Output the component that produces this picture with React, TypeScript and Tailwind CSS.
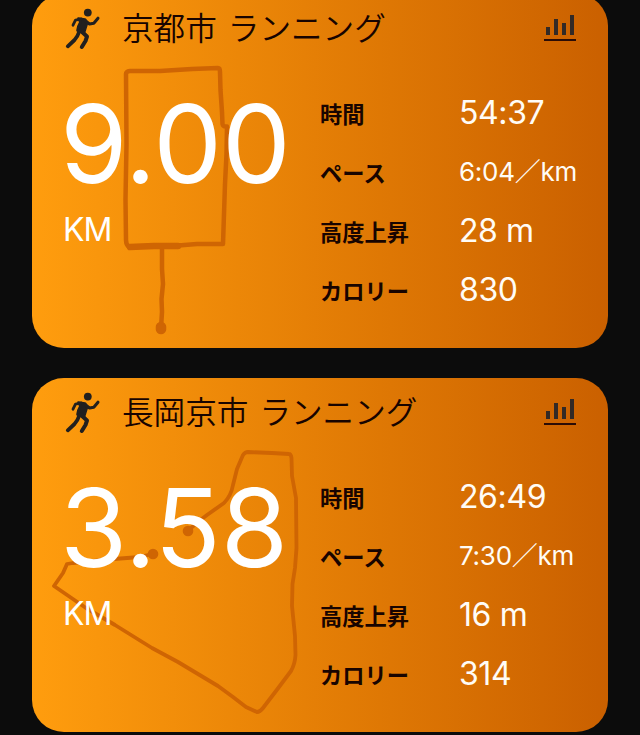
import React from 'react';

interface Run {
  id: number;
  title: string;
  distance: string;
  stats: { label: string; value: string; small?: boolean }[];
  route: string[];
  trail?: string;
  dots: [number, number][];
  lineWidth: number;
}

// Route coordinates are in card space (576 x 354)
const runs: Run[] = [
  {
    id: 1,
    title: '京都市 ランニング',
    distance: '9.00',
    stats: [
      { label: '時間', value: '54:37' },
      { label: 'ペース', value: '6:04／km', small: true },
      { label: '高度上昇', value: '28 m' },
      { label: 'カロリー', value: '830' }
    ],
    route: [
      'M97 253 Q94 251 94 246 L93.500 205 L94.500 150 L94 80 Q94 77.500 98 77 L128 77 L160 75 L186 74 Q188 74 188 78 L188.500 96 L190 118 L190.500 130 Q191 133 195 132.500 L194.500 160 L193 190 L192 220 L191 250 L165 250 L140 252 L97 253',
      'M130 254 L130 275 L131 290 L129.500 305 L130 318 L129 334'
    ],
    trail: 'M98 253 L122 252 L146 252',
    dots: [[129, 333], [129, 335]],
    lineWidth: 4.5
  },
  {
    id: 2,
    title: '長岡京市 ランニング',
    distance: '3.58',
    stats: [
      { label: '時間', value: '26:49' },
      { label: 'ペース', value: '7:30／km', small: true },
      { label: '高度上昇', value: '16 m' },
      { label: 'カロリー', value: '314' }
    ],
    route: [
      'M156 153 Q163 146 175 137 L192 125 Q199 118 201 107 L205 91 L211 77 Q213 74 216 74 L240 75 L257 76 Q259 76 259.500 80 L260 98 L264 120 L264.500 170 L263 190 L260.500 206 L260 228 L263 258 L263.500 277 Q263 286 259 293 L244 313 L231 330 Q228 334 225 334 L214 329 L201 319 L186 308 L146 284 L120 270 L83 247 L54 230 L22 208 L31 195 L35 186 L41 185 L82 181 L108 179 L120 176'
    ],
    dots: [[156, 153], [121, 176]],
    lineWidth: 3.8
  }
];

function RunnerIcon() {
  return (
    <svg className="relative top-px" width="36" height="42" viewBox="0 0 36 42" fill="none" stroke="#22201f" strokeLinecap="round" strokeLinejoin="round">
      <circle cx="22.800" cy="4.600" r="3.900" fill="#22201f" stroke="none" />
      <path d="M13.500 10.500 L20 11.500 L22 15 L19 24.500 L12.500 22.500 Q13 18 15.500 14 Z" fill="#22201f" strokeWidth="2.600" />
      <path d="M16 11 L10.500 12.200 L8 17.200" strokeWidth="2.800" />
      <path d="M20 12.500 L24.500 16 L28.800 15.300 L33 10.200" strokeWidth="3" />
      <path d="M14.500 23 Q12.500 29 9.500 32 L2.800 38.300" strokeWidth="3.800" />
      <path d="M15.500 22.500 L22 28.500 L20.500 33 L16.800 39" strokeWidth="4" />
    </svg>
  );
}

function ChartIcon() {
  return (
    <svg width="32" height="28" viewBox="0 0 32 28" fill="#332a26">
      <rect x="2" y="13" width="4" height="8" />
      <rect x="10" y="5" width="4" height="16" />
      <rect x="18" y="9" width="4" height="12" />
      <rect x="26" y="1" width="4" height="20" />
      <rect x="0" y="25" width="32" height="2" fill="#2b0c06" />
    </svg>
  );
}

function RouteMap({ run }: { run: Run }) {
  return (
    <svg
      className="absolute inset-0"
      width="576"
      height="354"
      viewBox="0 0 576 354"
      fill="none"
      stroke="#cf6503"
      strokeWidth={run.lineWidth}
      strokeLinecap="round"
      strokeLinejoin="round"
    >
      {run.route.map((d) => (
        <path key={d} d={d} />
      ))}
      {run.trail && <path d={run.trail} strokeWidth="6.500" />}
      {run.dots.map(([x, y]) => (
        <circle key={`${x}-${y}`} cx={x} cy={y} r="5.300" fill="#cf6503" stroke="none" />
      ))}
    </svg>
  );
}

function RunCard({ run }: { run: Run }) {
  return (
    <section className="relative h-[354px] w-[576px] shrink-0 overflow-hidden rounded-[32px] bg-linear-to-r from-[#ff9d0e] to-[#ca6000]">
      <RouteMap run={run} />
      <div className="relative flex h-full flex-col">
        <header className="flex h-[68px] items-center pl-[33px] pr-8">
          <RunnerIcon />
          <h2 className="ml-[21px] flex-1 whitespace-nowrap pb-[4px] font-['Noto_Sans_CJK_JP',sans-serif] text-[31.600px] font-[350] leading-[40px] text-[#180400] [word-spacing:4px]">
            {run.title}
          </h2>
          <ChartIcon />
        </header>
        <div className="flex flex-1">
          <div className="w-[288px] pl-[28px] pt-[26px] text-white">
            <p className="whitespace-nowrap text-[109px] leading-[110px] tracking-[-0.1px]">{run.distance}</p>
            <p className="ml-[3px] mt-[12px] text-[32px] leading-[40px] tracking-[-1px]">KM</p>
          </div>
          <dl className="flex-1 pt-[20px]">
            {run.stats.map((stat) => (
              <div key={stat.label} className="flex h-[59px] items-center">
                <dt className="w-[139px] pt-[2px] font-['Noto_Sans_CJK_JP',sans-serif] text-[22.250px] font-bold leading-[32px] text-[#180400]">
                  {stat.label}
                </dt>
                <dd
                  className={`whitespace-nowrap pt-[2px] text-[#fffcf6] ${
                    stat.small ? 'text-[26px] tracking-[-0.25px]' : 'text-[32px] tracking-[-0.4px]'
                  }`}
                >
                  {stat.value}
                </dd>
              </div>
            ))}
          </dl>
        </div>
      </div>
    </section>
  );
}

export default function App() {
  return (
    <main className="h-[735px] w-[640px] overflow-hidden bg-[#0c0c0c] font-['Inter','Noto_Sans_CJK_JP',sans-serif]">
      <div className="-mt-[6px] flex flex-col items-center gap-[30px]">
        {runs.map((run) => (
          <RunCard key={run.id} run={run} />
        ))}
      </div>
    </main>
  );
}
